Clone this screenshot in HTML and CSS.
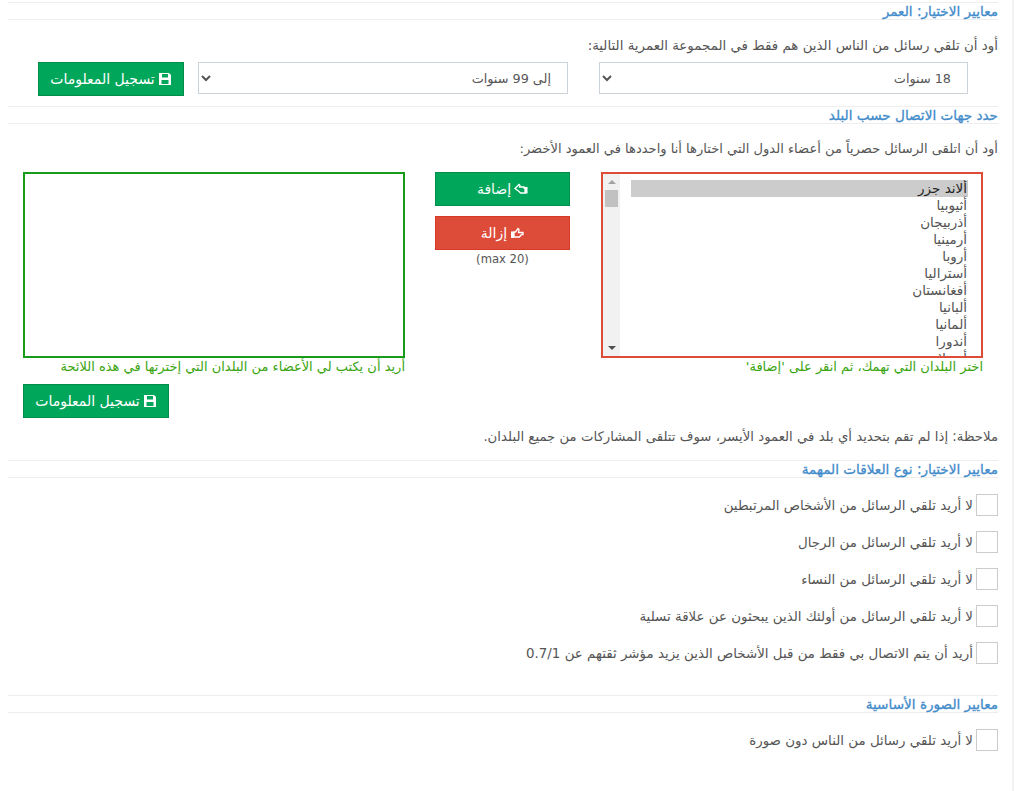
FILE: index.html
```html
<!DOCTYPE html>
<html lang="ar" dir="rtl">
  <head>
    <meta charset="UTF-8" />
    <title>معايير الاختيار</title>
    <link rel="stylesheet" href="styles.css">
  </head>
  <body>
    <div class="page">
      <h4 class="section-title first">معايير الاختيار: العمر</h4>
      <p class="intro">أود أن تلقي رسائل من الناس الذين هم فقط في المجموعة العمرية التالية:</p>
      <div class="age-row">
        <select class="age-select">
          <option>18 سنوات</option>
        </select>
        <select class="age-select">
          <option>إلى 99 سنوات</option>
        </select>
        <button class="btn btn-green" type="button">
          <svg class="icon" viewBox="0 0 14 14"><path fill="currentColor" fill-rule="evenodd" d="M1 1h10l2 2v10H1zM4 2v3.500h6V2zM3.500 8v4h7V8z"/></svg>
          تسجيل المعلومات
        </button>
      </div>

      <h4 class="section-title">حدد جهات الاتصال حسب البلد</h4>
      <p class="intro intro-country">أود أن اتلقى الرسائل حصرياً من أعضاء الدول التي اختارها أنا واحددها في العمود الأخضر:</p>
      <div class="country-row">
        <div class="country-col">
          <div class="country-list list-red">
            <div class="options">
              <div class="option selected">ألاند جزر</div>
              <div class="option">أثيوبيا</div>
              <div class="option">أذربيجان</div>
              <div class="option">أرمينيا</div>
              <div class="option">أروبا</div>
              <div class="option">أستراليا</div>
              <div class="option">أفغانستان</div>
              <div class="option">ألبانيا</div>
              <div class="option">ألمانيا</div>
              <div class="option">أندورا</div>
              <div class="option">أنغولا</div>
            </div>
            <div class="scrollbar">
              <span class="arrow-up"></span>
              <span class="thumb"></span>
              <span class="arrow-down"></span>
            </div>
          </div>
          <div class="list-help">اختر البلدان التي تهمك، ثم انقر على 'إضافة'</div>
        </div>
        <div class="move-col">
          <button class="btn btn-green btn-move" type="button">
            <svg class="icon" viewBox="0 0 14 14"><path fill="none" stroke="currentColor" stroke-width="1.300" d="M1 6.500 5 2.500 6 3.500 5.500 5H10v1h1v5H6.500L5 9.500z"/><path fill="currentColor" d="M11 5h2.500v6.500H11z"/></svg>
            إضافة
          </button>
          <button class="btn btn-red btn-move" type="button">
            <svg class="icon" viewBox="0 0 14 14"><path fill="none" stroke="currentColor" stroke-width="1.300" d="M13 6.500H8.500L9 3.500 8 2.500 5.500 6H4v5h5.500l2-2.500H13z"/><path fill="currentColor" d="M1 5.500h3V12H1z"/></svg>
            إزالة
          </button>
          <div class="max-note">(max 20)</div>
        </div>
        <div class="country-col">
          <div class="country-list list-green"></div>
          <div class="list-help">أريد أن يكتب لي الأعضاء من البلدان التي إخترتها في هذه اللائحة</div>
          <button class="btn btn-green btn-save" type="button">
            <svg class="icon" viewBox="0 0 14 14"><path fill="currentColor" fill-rule="evenodd" d="M1 1h10l2 2v10H1zM4 2v3.500h6V2zM3.500 8v4h7V8z"/></svg>
            تسجيل المعلومات
          </button>
        </div>
      </div>
      <p class="note">ملاحظة: إذا لم تقم بتحديد أي بلد في العمود الأيسر، سوف تتلقى المشاركات من جميع البلدان.</p>

      <h4 class="section-title">معايير الاختيار: نوع العلاقات المهمة</h4>
      <div class="check-list">
        <label class="check-row"><span class="box"></span>لا أريد تلقي الرسائل من الأشخاص المرتبطين</label>
        <label class="check-row"><span class="box"></span>لا أريد تلقي الرسائل من الرجال</label>
        <label class="check-row"><span class="box"></span>لا أريد تلقي الرسائل من النساء</label>
        <label class="check-row"><span class="box"></span>لا أريد تلقي الرسائل من أولئك الذين يبحثون عن علاقة تسلية</label>
        <label class="check-row"><span class="box"></span>أريد أن يتم الاتصال بي فقط من قبل الأشخاص الذين يزيد مؤشر ثقتهم عن 0.7/1</label>
      </div>

      <h4 class="section-title photo-title">معايير الصورة الأساسية</h4>
      <div class="check-list">
        <label class="check-row"><span class="box"></span>لا أريد تلقي رسائل من الناس دون صورة</label>
      </div>
    </div>
  </body>
</html>
```

FILE: styles.css
```css
* {
  box-sizing: border-box;
}

html {
  height: 100%;
}

body {
  margin: 0;
  min-height: 100vh;
  background: white;
  color: #555;
  font-family: "DejaVu Sans", "Noto Sans", sans-serif;
  font-size: 13.4px;
  border-right: 2px solid #f2f2f2;
  direction: ltr;
}

.page {
  direction: rtl;
  padding: 2px 14px 0 8px;
}

.section-title {
  margin: 0;
  height: 18px;
  border-top: 1px solid #eee;
  border-bottom: 1px solid #eee;
  color: #428bca;
  font-size: 13.6px;
  font-weight: 400;
  line-height: 16px;
  -webkit-text-stroke: 0.3px #428bca;
}

.intro {
  margin: 17px 0 0;
  line-height: 18px;
}

.intro-country {
  margin-top: 16px;
  font-size: 13.05px;
}

.age-row {
  display: flex;
  align-items: flex-start;
  margin-top: 7px;
  padding-right: 30px;
  margin-bottom: 10px;
}

.age-select {
  width: 369px;
  height: 32px;
  margin-left: 31px;
  padding: 0 12px 0 13px;
  background: white;
  border: 1px solid #ccd2da;
  border-radius: 0;
  color: #555;
  font-family: inherit;
  font-size: 12.8px;
}

.age-select + .age-select {
  width: 370px;
  margin-left: 14px;
}

.btn {
  display: flex;
  align-items: center;
  justify-content: center;
  gap: 3px;
  height: 34px;
  padding: 0;
  border: 1px solid transparent;
  border-radius: 0;
  color: white;
  font-family: inherit;
  font-size: 14px;
  cursor: pointer;
}

.btn-green {
  width: 146px;
  background: #00a65a;
  border-color: #008d4c;
}

.btn-red {
  background: #dd4b39;
  border-color: #d73925;
}

.icon {
  width: 14px;
  height: 14px;
  flex: none;
}

.country-row {
  display: flex;
  align-items: flex-start;
  margin-top: 14px;
  padding-right: 15px;
}

.country-col {
  width: 382px;
}

.country-list {
  display: flex;
  height: 186px;
  background: white;
}

.list-red {
  border: 2px solid #dd4b39;
}

.list-green {
  border: 2px solid #189b18;
}

.options {
  flex: 1;
  margin: 6px 13px 0 11px;
  overflow: hidden;
}

.option {
  padding: 0 1px;
  font-size: 13.5px;
  line-height: 17px;
}

.option.selected {
  background: #ccc;
  color: #222;
}

.scrollbar {
  display: flex;
  flex-direction: column;
  align-items: center;
  width: 17px;
  flex: none;
  background: #f1f1f1;
}

.thumb {
  width: 13px;
  height: 17px;
  margin-top: 6px;
  background: #c1c1c1;
}

.arrow-up {
  width: 0;
  height: 0;
  margin-top: 6px;
  border-left: 4px solid transparent;
  border-right: 4px solid transparent;
  border-bottom: 4px solid #a3a3a3;
}

.arrow-down {
  width: 0;
  height: 0;
  margin-top: auto;
  margin-bottom: 6px;
  border-left: 4px solid transparent;
  border-right: 4px solid transparent;
  border-top: 4px solid #505050;
}

.list-help {
  margin-top: 1px;
  color: #3aa50f;
  font-size: 13px;
  line-height: 16px;
}

.move-col {
  width: 135px;
  margin: 0 31px 0 30px;
}

.btn-move {
  width: 100%;
  margin-bottom: 10px;
}

.max-note {
  margin-top: -9px;
  font-size: 11.6px;
  line-height: 16px;
  text-align: center;
}

.btn-save {
  margin: 9px auto 0 0;
}

.note {
  margin: 10px 0 0;
  font-size: 13.27px;
  line-height: 18px;
}

.note + .section-title {
  margin-top: 14px;
}

.check-list {
  display: flex;
  flex-direction: column;
  gap: 15px;
  margin-top: 16px;
}

.check-row {
  display: flex;
  align-items: center;
  gap: 3px;
  height: 22px;
}

.box {
  width: 22px;
  height: 22px;
  flex: none;
  border: 1px solid #ccc;
  background: white;
}

.photo-title {
  margin-top: 31px;
}
```
